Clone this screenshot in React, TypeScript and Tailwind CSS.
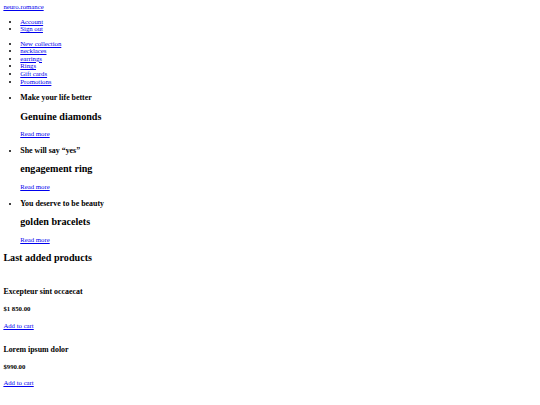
import React from "react";

const link = "text-[#0000ee] underline";

function Slide({ kicker, title }: { kicker: string; title: string }) {
  return (
    <li>
      <h3 className="text-[7.9px] leading-[9.1px] font-bold my-[7.9px]">{kicker}</h3>
      <h2 className="text-[10.125px] leading-[11.39px] font-bold my-[8.4px]">{title}</h2>
      <p className="my-[6.75px]">
        <a href="#" className={link}>Read more</a>
      </p>
    </li>
  );
}

function Product({ name, price }: { name: string; price: string }) {
  return (
    <div>
      <div className="h-[7.59px]" />
      <h3 className="text-[7.9px] leading-[9.1px] font-bold my-[7.9px]">{name}</h3>
      <h4 className="text-[6.75px] font-bold my-[8.98px]">{price}</h4>
      <a href="#" className={link}>Add to cart</a>
    </div>
  );
}

export default function App() {
  return (
    <div
      className="bg-white text-black text-[6.75px] leading-[7.59px] p-[3.375px] w-[540px] h-[405px] overflow-hidden"
      style={{ fontFamily: '"Liberation Serif", "Times New Roman", serif' }}
    >
      <a href="#" className={link}>neuro.romance</a>
      <ul className="list-disc pl-[16.875px] my-[6.75px]">
        <li><a href="#" className={link}>Account</a></li>
        <li><a href="#" className={link}>Sign out</a></li>
      </ul>
      <ul className="list-disc pl-[16.875px] my-[6.75px]">
        <li><a href="#" className={link}>New collection</a></li>
        <li><a href="#" className={link}>necklaces</a></li>
        <li><a href="#" className={link}>earrings</a></li>
        <li><a href="#" className={link}>Rings</a></li>
        <li><a href="#" className={link}>Gift cards</a></li>
        <li><a href="#" className={link}>Promotions</a></li>
      </ul>
      <ul className="list-disc pl-[16.875px] my-[6.75px]">
        <Slide kicker="Make your life better" title="Genuine diamonds" />
        <Slide kicker="She will say “yes”" title="engagement ring" />
        <Slide kicker="You deserve to be beauty" title="golden bracelets" />
      </ul>
      <h2 className="text-[10.125px] leading-[11.39px] font-bold my-[8.4px]">Last added products</h2>
      <Product name="Excepteur sint occaecat" price="$1 850.00" />
      <Product name="Lorem ipsum dolor" price="$990.00" />
    </div>
  );
}
